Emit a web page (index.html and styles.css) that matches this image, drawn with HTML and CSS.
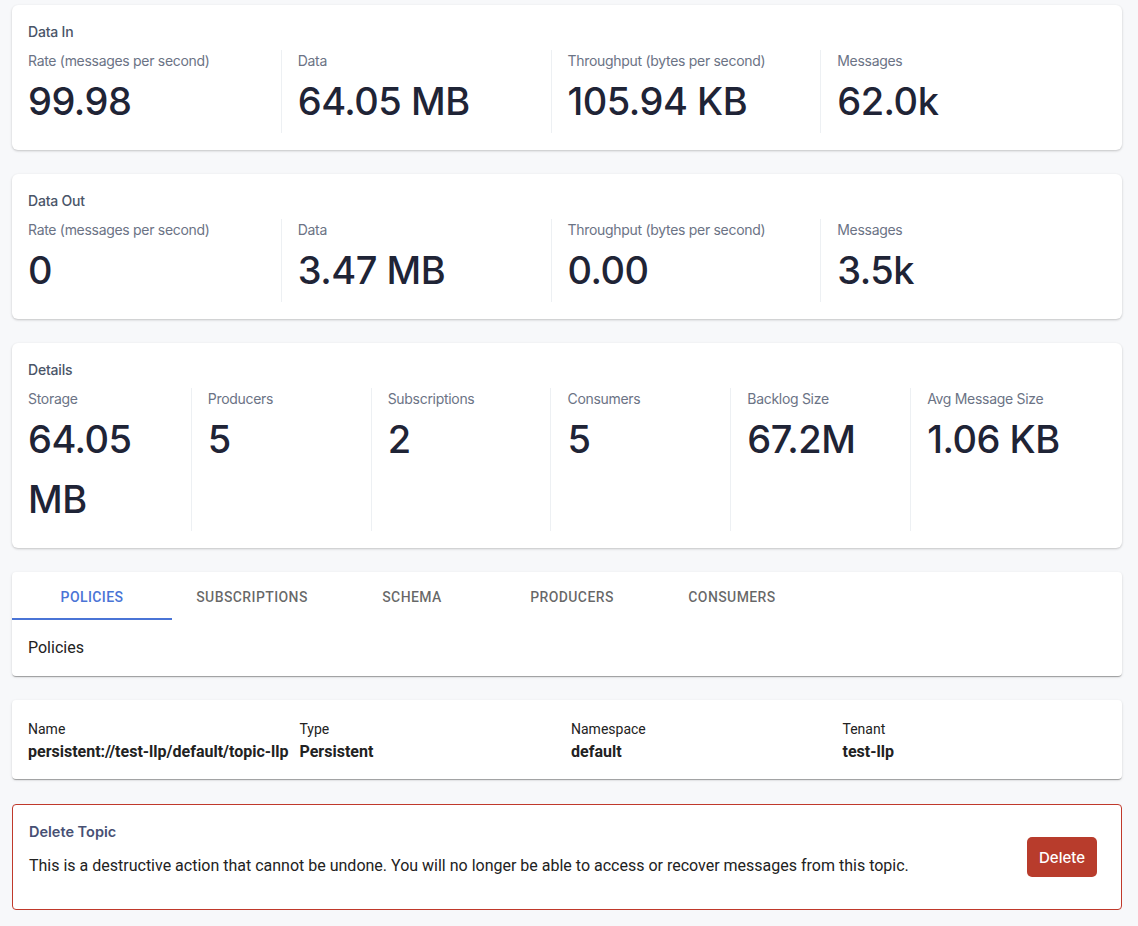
FILE: index.html
```html
<!DOCTYPE html>
<html>
<head>
<meta charset="utf-8">
<link rel="stylesheet" href="styles.css">
</head>
<body>
<div class="page">
  <section class="card stat-card">
    <div class="card-title">Data In</div>
    <div class="stats">
      <div class="stat"><div class="stat-label">Rate (messages per second)</div><div class="stat-value">99.98</div></div>
      <div class="stat"><div class="stat-label">Data</div><div class="stat-value">64.05 MB</div></div>
      <div class="stat"><div class="stat-label">Throughput (bytes per second)</div><div class="stat-value">105.94 KB</div></div>
      <div class="stat"><div class="stat-label">Messages</div><div class="stat-value">62.0k</div></div>
    </div>
  </section>

  <section class="card stat-card">
    <div class="card-title">Data Out</div>
    <div class="stats">
      <div class="stat"><div class="stat-label">Rate (messages per second)</div><div class="stat-value">0</div></div>
      <div class="stat"><div class="stat-label">Data</div><div class="stat-value">3.47 MB</div></div>
      <div class="stat"><div class="stat-label">Throughput (bytes per second)</div><div class="stat-value">0.00</div></div>
      <div class="stat"><div class="stat-label">Messages</div><div class="stat-value">3.5k</div></div>
    </div>
  </section>

  <section class="card stat-card">
    <div class="card-title">Details</div>
    <div class="stats">
      <div class="stat"><div class="stat-label">Storage</div><div class="stat-value">64.05 MB</div></div>
      <div class="stat"><div class="stat-label">Producers</div><div class="stat-value">5</div></div>
      <div class="stat"><div class="stat-label">Subscriptions</div><div class="stat-value">2</div></div>
      <div class="stat"><div class="stat-label">Consumers</div><div class="stat-value">5</div></div>
      <div class="stat"><div class="stat-label">Backlog Size</div><div class="stat-value">67.2M</div></div>
      <div class="stat"><div class="stat-label">Avg Message Size</div><div class="stat-value">1.06 KB</div></div>
    </div>
  </section>

  <section class="paper tabs-card">
    <div class="tabs">
      <div class="tab active">Policies</div>
      <div class="tab">Subscriptions</div>
      <div class="tab">Schema</div>
      <div class="tab">Producers</div>
      <div class="tab">Consumers</div>
    </div>
    <div class="tab-panel">Policies</div>
  </section>

  <section class="paper info-card">
    <div class="info-item"><div class="info-label">Name</div><div class="info-value">persistent://test-llp/default/topic-llp</div></div>
    <div class="info-item"><div class="info-label">Type</div><div class="info-value">Persistent</div></div>
    <div class="info-item"><div class="info-label">Namespace</div><div class="info-value">default</div></div>
    <div class="info-item"><div class="info-label">Tenant</div><div class="info-value">test-llp</div></div>
  </section>

  <section class="danger-card">
    <div class="danger-text">
      <div class="danger-title">Delete Topic</div>
      <div class="danger-desc">This is a destructive action that cannot be undone. You will no longer be able to access or recover messages from this topic.</div>
    </div>
    <button class="danger-btn">Delete</button>
  </section>
</div>
</body>
</html>
```

FILE: styles.css
```css
* { box-sizing: border-box; }
html, body { margin: 0; padding: 0; }
body {
  background: #f7f8fa;
  font-family: Roboto, "Liberation Sans", sans-serif;
  color: #222;
}
.page {
  padding: 5px 16px 16px 12px;
  display: flex;
  flex-direction: column;
  gap: 24px;
}
.card {
  background: #fff;
  border-radius: 6px;
  box-shadow: 0 1px 3px rgba(0,0,0,0.12), 0 1px 2px rgba(0,0,0,0.10);
}
.stat-card {
  padding: 16px 32px 17px 16px;
  font-family: Inter, "Liberation Sans", sans-serif;
}
.card-title {
  font-size: 14px;
  line-height: 21px;
  font-weight: 500;
  color: #4a5568;
  margin-bottom: 8px;
  letter-spacing: -0.2px;
}
.stats {
  display: flex;
}
.stat {
  flex: 1 1 0;
  min-width: 0;
  padding-bottom: 2px;
}
.stat + .stat {
  border-left: 1px solid #edf0f3;
  padding-left: 16px;
}
.stat-label {
  font-size: 14px;
  line-height: 21px;
  color: #6b7385;
  letter-spacing: -0.3px;
}
.stat-value {
  font-size: 38px;
  line-height: 60px;
  font-weight: 500;
  color: #1f2436;
  letter-spacing: -0.5px;
}
.paper {
  background: #fff;
  border-radius: 4px;
  box-shadow: 0 2px 1px -1px rgba(0,0,0,0.2), 0 1px 1px 0 rgba(0,0,0,0.14), 0 1px 3px 0 rgba(0,0,0,0.12);
}
.tabs {
  display: flex;
  height: 48px;
}
.tab {
  width: 160px;
  display: flex;
  align-items: center;
  justify-content: center;
  padding-top: 4px;
  font-size: 14px;
  font-weight: 500;
  text-transform: uppercase;
  letter-spacing: 0.4px;
  color: rgba(0,0,0,0.6);
  border-bottom: 2px solid transparent;
}
.tab.active {
  color: #4a74d6;
  border-bottom-color: #4a74d6;
}
.tab-panel {
  padding: 16px;
  font-size: 16px;
  line-height: 24px;
  color: #222;
}
.info-card {
  padding: 18px 8px 15px 16px;
  display: grid;
  grid-template-columns: repeat(4, 1fr);
}
.info-item { min-width: 0; }
.info-label {
  font-size: 14px;
  line-height: 22px;
  color: #222;
}
.info-value {
  font-size: 16px;
  line-height: 24px;
  font-weight: 700;
  color: #222;
  white-space: nowrap;
}
.danger-card {
  margin-top: 1px;
  background: #fff;
  border: 1px solid #c0392b;
  border-radius: 4px;
  padding: 16px 24px 16px 16px;
  display: flex;
  align-items: center;
  justify-content: space-between;
}
.danger-title {
  font-family: Inter, "Liberation Sans", sans-serif;
  font-size: 14.5px;
  line-height: 21px;
  font-weight: 600;
  color: #475074;
  margin-bottom: 12px;
}
.danger-desc {
  font-size: 16px;
  line-height: 24px;
  color: #222;
  padding-bottom: 15px;
}
.danger-btn {
  width: 70px;
  height: 40px;
  border: none;
  border-radius: 5px;
  background: #b83c2c;
  color: #fff;
  font-family: Inter, "Liberation Sans", sans-serif;
  font-size: 15px;
  font-weight: 500;
}
```
